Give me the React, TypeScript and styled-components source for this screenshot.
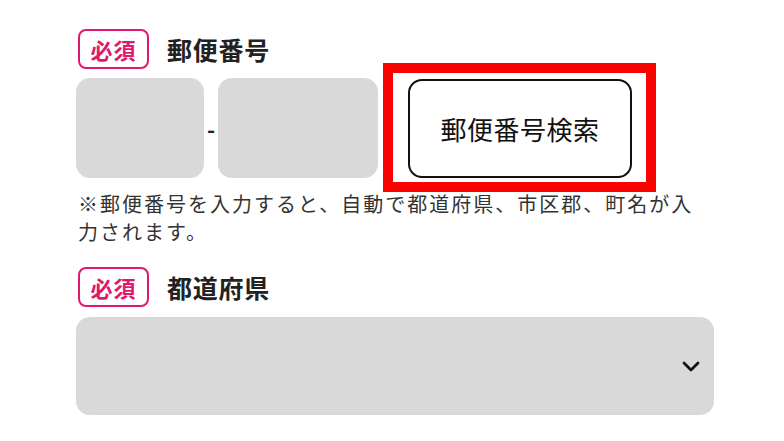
import styled, { createGlobalStyle } from 'styled-components'

const GlobalStyle = createGlobalStyle`
  body {
    margin: 0;
    background: #fff;
    font-family: 'Noto Sans CJK JP', 'Noto Sans', sans-serif;
    color: #222;
  }
`

const Form = styled.div`
  width: 638px;
  padding: 29px 0 0 76px;
  display: flex;
  flex-direction: column;
`

const Field = styled.div<{ $gap?: number }>`
  display: flex;
  flex-direction: column;
  margin-top: ${p => p.$gap ?? 0}px;
`

const LabelRow = styled.div`
  display: flex;
  align-items: center;
  gap: 18px;
  padding-left: 2px;
`

const Badge = styled.span`
  box-sizing: border-box;
  width: 71px;
  height: 40px;
  display: inline-flex;
  align-items: center;
  justify-content: center;
  border: 2px solid #e0196d;
  border-radius: 8px;
  color: #e0196d;
  font-size: 22px;
  font-weight: 700;
  letter-spacing: 0.04em;
`

const Label = styled.span`
  font-size: 25px;
  font-weight: 700;
  letter-spacing: 0.03em;
  color: #222;
`

const ZipRow = styled.div`
  display: flex;
  align-items: center;
  margin-top: 9px;
`

const TextBox = styled.div<{ $w: number }>`
  width: ${p => p.$w}px;
  height: 100px;
  background: #d9d9d9;
  border-radius: 14px;
`

const Dash = styled.span`
  width: 14px;
  text-align: center;
  font-size: 22px;
  font-weight: 700;
  line-height: 1;
  color: #222;
`

const SearchButton = styled.button`
  position: relative;
  box-sizing: border-box;
  margin-left: 30px;
  width: 224px;
  height: 99px;
  background: #fff;
  border: 2px solid #111;
  border-radius: 14px;
  font-family: 'Noto Sans CJK JP', sans-serif;
  font-size: 26px;
  letter-spacing: 0.02em;
  color: #111;
  cursor: pointer;

  &::after {
    content: '';
    position: absolute;
    top: -18px;
    left: -27px;
    right: -26px;
    bottom: -16px;
    border: 10px solid #ff0000;
    pointer-events: none;
  }
`

const Note = styled.p`
  margin: 12px 0 0;
  padding-left: 2px;
  font-size: 20px;
  line-height: 28px;
  letter-spacing: 0.1em;
  color: #333;
`

const Select = styled.div`
  margin-top: 10px;
  height: 98px;
  background: #d9d9d9;
  border-radius: 14px;
  display: flex;
  align-items: center;
  justify-content: flex-end;
  padding-right: 13px;
`

const Chevron = () => (
  <svg width='20' height='12' viewBox='0 0 20 12' fill='none'>
    <path d='M3 3l7 7L17 3' stroke='#111' strokeWidth='2.8' strokeLinecap='round' strokeLinejoin='round' />
  </svg>
)

const App = (): JSX.Element => {
  return (
    <>
      <GlobalStyle />
      <Form>
        <Field>
          <LabelRow>
            <Badge>必須</Badge>
            <Label>郵便番号</Label>
          </LabelRow>
          <ZipRow>
            <TextBox $w={128} />
            <Dash>-</Dash>
            <TextBox $w={160} />
            <SearchButton>郵便番号検索</SearchButton>
          </ZipRow>
          <Note>
            ※郵便番号を入力すると、自動で都道府県、市区郡、町名が入力されます。
          </Note>
        </Field>
        <Field $gap={21}>
          <LabelRow>
            <Badge>必須</Badge>
            <Label>都道府県</Label>
          </LabelRow>
          <Select>
            <Chevron />
          </Select>
        </Field>
      </Form>
    </>
  )
}

export default App
